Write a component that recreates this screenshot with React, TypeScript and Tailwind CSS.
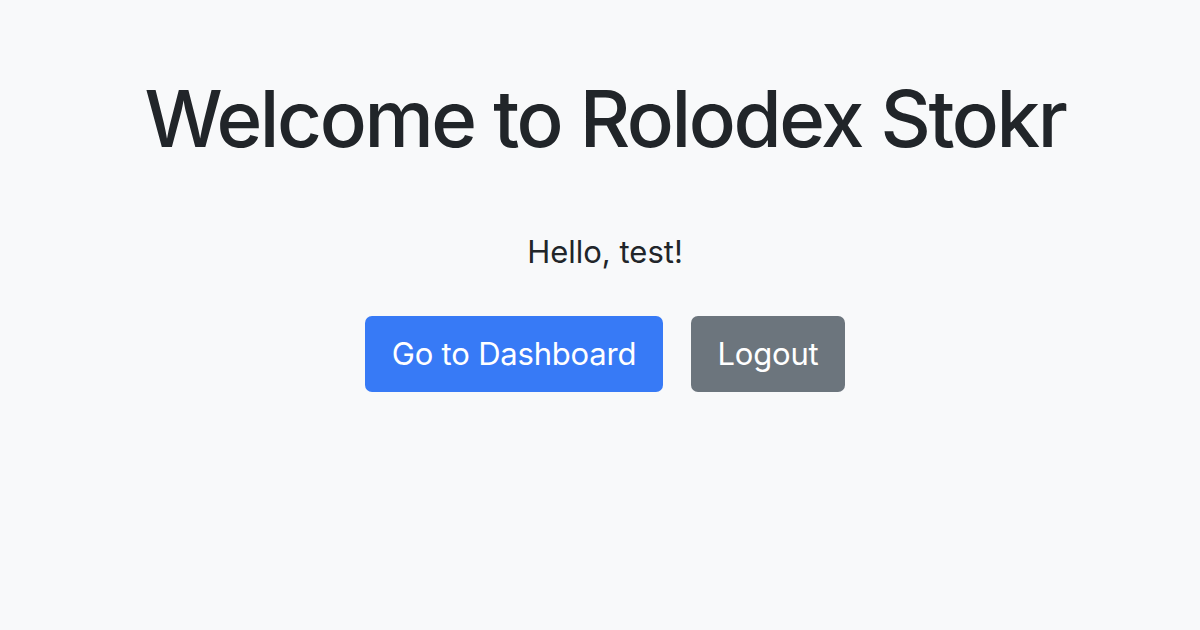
export default function App() {
  return (
    <main className="w-[1200px] h-[630px] bg-[#f8f9fa] text-[#212529] flex flex-col items-center pt-[72px] pl-[10px] font-['Inter','Liberation_Sans',sans-serif]">
      <h1 className="text-[78px] leading-[94px] font-medium tracking-[-2.4px]">Welcome to Rolodex Stokr</h1>
      <p className="mt-[63px] text-[31px] leading-[45px]">Hello, test!</p>
      <div className="mt-[42px] flex gap-[28px]">
        <button className="h-[76px] w-[298px] rounded-[7px] bg-[#377af6] text-white text-[31px] tracking-[-0.2px]">Go to Dashboard</button>
        <button className="h-[76px] w-[154px] rounded-[7px] bg-[#6c757d] text-white text-[31px] tracking-[-0.2px]">Logout</button>
      </div>
    </main>
  );
}
